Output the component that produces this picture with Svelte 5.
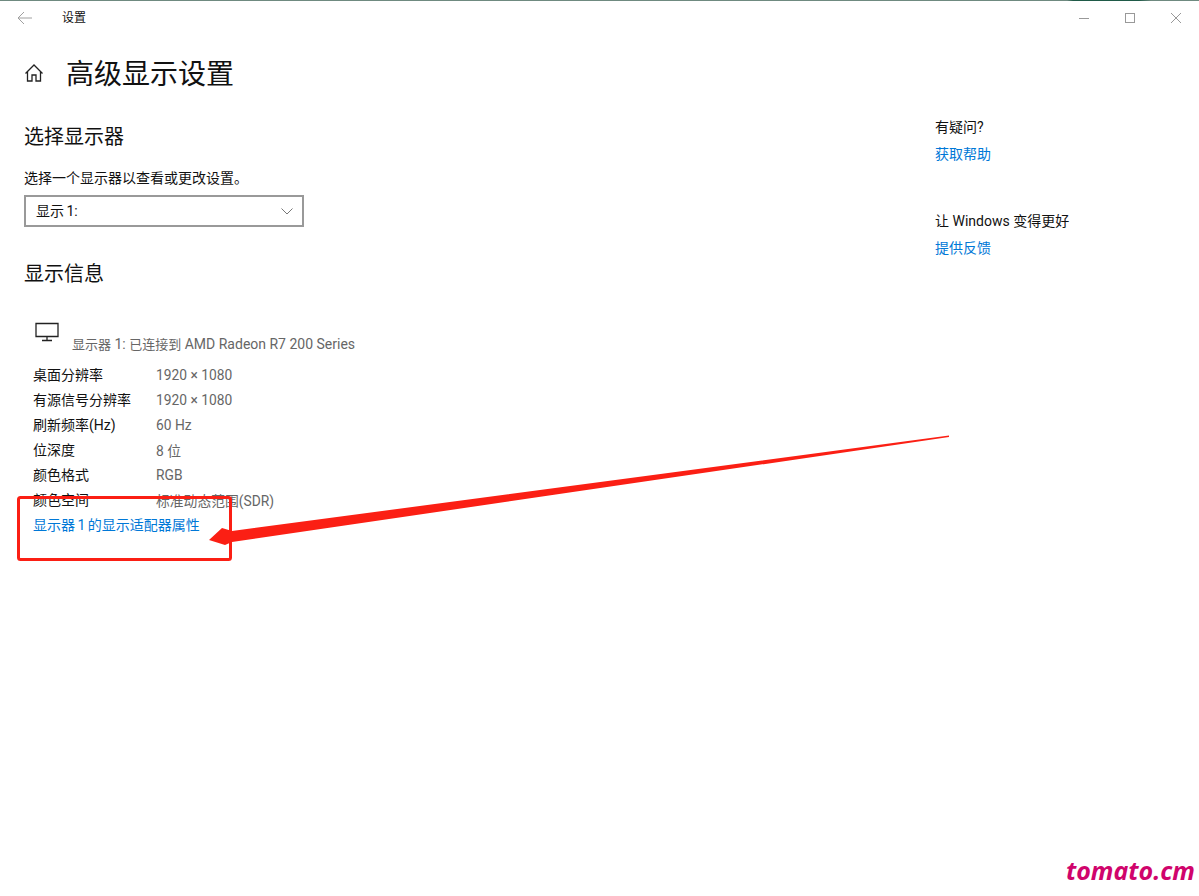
<script>
  const rows = [
    ["桌面分辨率", "1920 × 1080"],
    ["有源信号分辨率", "1920 × 1080"],
    ["刷新频率(Hz)", "60 Hz"],
    ["位深度", "8 位"],
    ["颜色格式", "RGB"],
    ["颜色空间", "标准动态范围(SDR)"],
  ];
</script>

<div class="window">
  <div class="edge"></div>

  <!-- title bar -->
  <div class="titlebar">
    <svg class="back" width="16" height="14" viewBox="0 0 16 14" fill="none" stroke="#a0a0a0" stroke-width="1">
      <path d="M1 7h14M7 1L1 7l6 6" />
    </svg>
    <span class="app-name">设置</span>
    <div class="controls">
      <svg width="12" height="12" viewBox="0 0 12 12" stroke="#999" fill="none"><path d="M1 6.5h10" /></svg>
      <svg width="12" height="12" viewBox="0 0 12 12" stroke="#999" fill="none"><rect x="1.5" y="1.5" width="9" height="9" /></svg>
      <svg width="12" height="12" viewBox="0 0 12 12" stroke="#999" fill="none"><path d="M1 1l10 10M11 1L1 11" /></svg>
    </div>
  </div>

  <div class="body">
    <main>
      <header>
        <svg class="home" width="20" height="20" viewBox="0 0 20 20" fill="none" stroke="#222" stroke-width="1.3">
          <path d="M1.5 10.5L10 2l8.500 8.500M3.500 8.500V18h4.500v-6h4v6h4.500V8.500" />
        </svg>
        <h1>高级显示设置</h1>
      </header>

      <h2 class="select-title">选择显示器</h2>
      <p class="hint">选择一个显示器以查看或更改设置。</p>
      <div class="select">
        <span>显示 1:</span>
        <svg width="12" height="7" viewBox="0 0 12 7" fill="none" stroke="#777"><path d="M.5.5L6 6 11.5.5" /></svg>
      </div>

      <h2 class="info-title">显示信息</h2>

      <div class="monitor">
        <svg width="24" height="20" viewBox="0 0 24 20" fill="none" stroke="#222" stroke-width="1.3">
          <path d="M1 1.500h22v13H1zM12 14.500v4M7 18.500h10" />
        </svg>
        <span class="monitor-name"><span class="cjk">显示器</span> 1: <span class="cjk">已连接到</span> AMD Radeon R7 200 Series</span>
      </div>

      <div class="rows">
        {#each rows as [label, value]}
          <div class="row">
            <span class="label">{label}</span>
            <span class="value">{value}</span>
          </div>
        {/each}
        <a class="row-link" href="#adapter">显示器 1 的显示适配器属性</a>
      </div>
    </main>

    <aside>
      <p>有疑问?</p>
      <a href="#help">获取帮助</a>
      <p class="second">让 Windows 变得更好</p>
      <a href="#feedback">提供反馈</a>
    </aside>
  </div>

  <!-- annotation drawn over the screenshot -->
  <svg class="annotation" width="1199" height="896" viewBox="0 0 1199 896">
    <rect x="18.500" y="497.500" width="212" height="62" rx="2" fill="none" stroke="#fb1f14" stroke-width="3" />
    <polygon points="949,435.500 949,437 232,542 225,545 209,540 222,528 232,531" fill="#fb1f14" />
  </svg>
  <span class="watermark">tomato.cm</span>
</div>

<style>
  :global(body) {
    background: #fff;
  }

  .window {
    position: relative;
    width: 1199px;
    height: 896px;
    overflow: hidden;
    background: #fff;
    color: #111;
    font-family: Roboto, "Noto Sans CJK SC", sans-serif;
    font-size: 14px;
  }

  .edge {
    height: 1px;
    background: linear-gradient(to right, #6f8a80 89%, #1f5a48 89.5%, #1f5a48 95%, #6f8a80 96%);
  }

  .titlebar {
    display: flex;
    align-items: center;
    height: 33px;
    padding-left: 17px;
  }

  .back {
    margin-right: 29px;
  }

  .app-name {
    padding-bottom: 2px;
    font-size: 12px;
  }

  .controls {
    display: flex;
    gap: 34px;
    margin-left: auto;
    padding-right: 17px;
  }

  .body {
    display: flex;
    justify-content: space-between;
  }

  main {
    padding-left: 24px;
  }

  header {
    display: flex;
    align-items: center;
    gap: 22px;
    margin-top: 17px;
    height: 44px;
  }

  h1 {
    margin: 4px 0 0;
    font-size: 28px;
    font-weight: 400;
    line-height: 44px;
  }

  h2 {
    margin: 0;
    font-size: 20px;
    font-weight: 400;
    line-height: 28px;
  }

  .select-title {
    margin-top: 28px;
  }

  .hint {
    margin: 17px 0 0;
    font-size: 14px;
    line-height: 20px;
  }

  .select {
    display: flex;
    align-items: center;
    justify-content: space-between;
    width: 280px;
    height: 32px;
    margin-top: 7px;
    padding: 0 9px 0 10px;
    box-sizing: border-box;
    border: 2px solid #999;
    word-spacing: -1px;
  }

  .select span {
    padding-bottom: 2px;
  }

  .info-title {
    margin-top: 33px;
  }

  .monitor {
    display: flex;
    margin-top: 34px;
    padding-left: 11px;
    height: 32px;
  }

  .monitor-name {
    margin: 12px 0 0 13px;
    color: #666;
    font-size: 14px;
    line-height: 20px;
  }

  .cjk {
    font-size: 13px;
  }

  .rows {
    padding-left: 9px;
    margin-top: 8px;
  }

  .row {
    display: flex;
    height: 25px;
    align-items: center;
  }

  .label {
    width: 123px;
    padding-bottom: 2px;
  }

  .value {
    color: #666;
    font-size: 13.800px;
  }

  .row-link {
    display: block;
    line-height: 27px;
    word-spacing: -1px;
  }

  a {
    color: #0078d7;
    text-decoration: none;
  }

  aside {
    width: 264px;
    padding-top: 83px;
    line-height: 20px;
  }

  aside p {
    margin: 0 0 7px;
  }

  aside .second {
    margin-top: 47px;
  }

  .annotation {
    position: absolute;
    top: 0;
    left: 0;
    pointer-events: none;
  }

  .watermark {
    position: absolute;
    right: 4px;
    bottom: 12px;
    color: #d0046c;
    font-family: "Open Sans", sans-serif;
    font-size: 25px;
    font-weight: 700;
    font-style: italic;
    line-height: 28px;
  }
</style>
